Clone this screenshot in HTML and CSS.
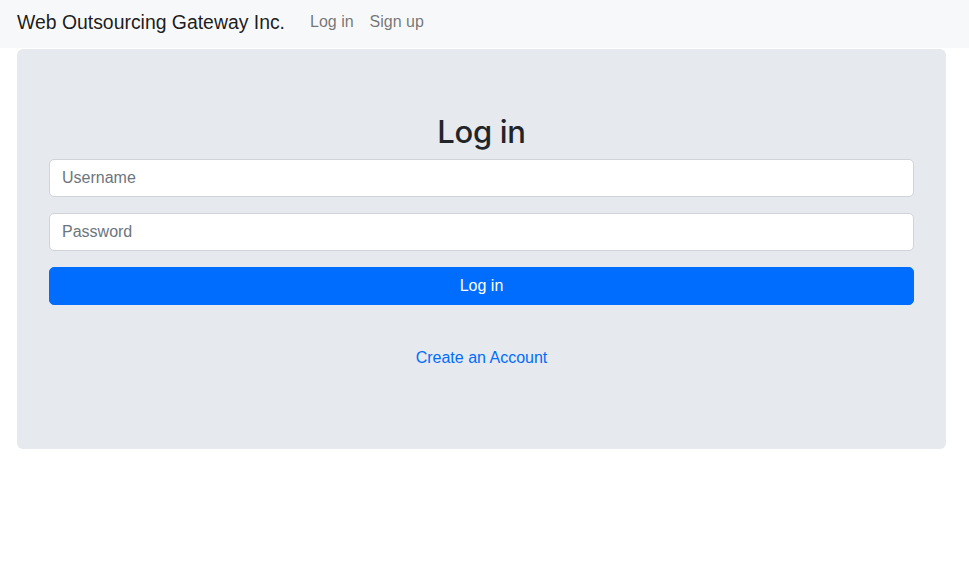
FILE: index.html
```html
<!DOCTYPE html>
<html lang="en">
<head>
<meta charset="utf-8">
<title>Log in</title>
<link rel="stylesheet" href="styles.css">
</head>
<body>
<nav class="navbar">
  <a class="brand" href="#">Web Outsourcing Gateway Inc.</a>
  <a class="nav-link" href="#">Log in</a>
  <a class="nav-link" href="#">Sign up</a>
</nav>
<main class="panel">
  <h2 class="title">Log in</h2>
  <form class="form">
    <input class="field" type="text" placeholder="Username">
    <input class="field" type="password" placeholder="Password">
    <button class="btn" type="button">Log in</button>
  </form>
  <p class="alt"><a class="link" href="#">Create an Account</a></p>
</main>
</body>
</html>
```
FILE: styles.css
```css
* { box-sizing: border-box; }
html, body { margin: 0; padding: 0; }
body {
  font-family: "Liberation Sans", Arial, sans-serif;
  font-size: 16px;
  line-height: 1.5;
  color: #212529;
  background: #fff;
}
.navbar {
  display: flex;
  align-items: center;
  height: 48px;
  padding: 0 17px;
  background: #f7f8fa;
}
.brand {
  font-size: 19.4px;
  color: rgba(0,0,0,.9);
  text-decoration: none;
  margin-right: 25px;
  line-height: 30px;
  padding-bottom: 4px;
}
.nav-link {
  color: rgba(0,0,0,.55);
  text-decoration: none;
  margin-right: 16px;
  padding-bottom: 4px;
}
.panel {
  margin: 1px 23px 0 17px;
  padding: 64px 32px;
  background: #e6e9ed;
  border-radius: 6px;
}
.title {
  margin: 0 0 8px;
  text-align: center;
  font-family: Inter, "Liberation Sans", Arial, sans-serif;
  font-size: 31px;
  font-weight: 500;
  line-height: 38.4px;
  letter-spacing: -0.3px;
}
.form {
  display: flex;
  flex-direction: column;
  gap: 16px;
}
.field {
  height: 38px;
  padding: 6px 12px;
  font: inherit;
  color: #212529;
  background: #fff;
  border: 1px solid #ced4da;
  border-radius: 5px;
}
.field::placeholder { color: #6c757d; }
.btn {
  height: 38px;
  font: inherit;
  font-weight: 500;
  color: #fff;
  background: #006dfe;
  border: 1px solid #006dfe;
  border-radius: 5px;
}
.alt {
  margin: 41px 0 15px;
  text-align: center;
}
.link {
  color: #006dfe;
  text-decoration: none;
}
```
